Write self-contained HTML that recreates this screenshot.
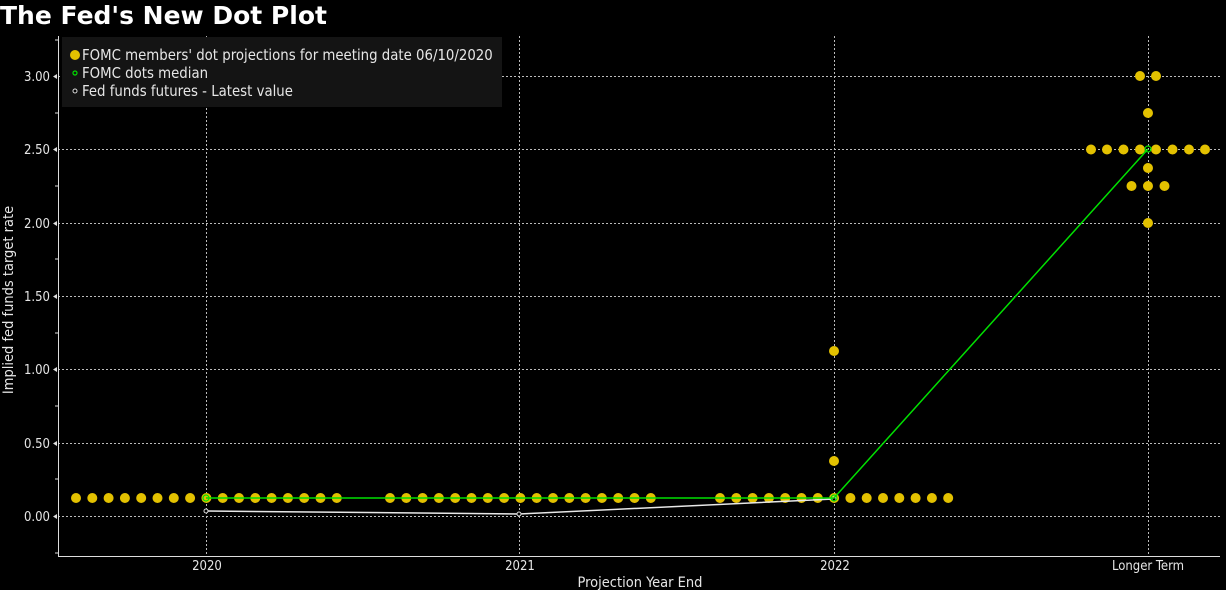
<!DOCTYPE html>
<html><head><meta charset="utf-8"><style>
html,body{margin:0;padding:0;background:#000;width:1226px;height:590px;overflow:hidden}
svg{display:block}
text{font-family:"DejaVu Sans Condensed","Liberation Sans",sans-serif;fill:#e6e6e6}
</style></head><body>
<svg width="1226" height="590" viewBox="0 0 1226 590">
<text x="0" y="24" style="font-family:'DejaVu Sans',sans-serif;font-weight:bold;font-size:25px;fill:#fff">The Fed's New Dot Plot</text>
<g stroke="#bbb" stroke-width="1" stroke-dasharray="2,2">
<line x1="58" y1="76.5" x2="1220" y2="76.5"/>
<line x1="58" y1="149.5" x2="1220" y2="149.5"/>
<line x1="58" y1="223.5" x2="1220" y2="223.5"/>
<line x1="58" y1="296.5" x2="1220" y2="296.5"/>
<line x1="58" y1="369.5" x2="1220" y2="369.5"/>
<line x1="58" y1="443.5" x2="1220" y2="443.5"/>
<line x1="58" y1="516.5" x2="1220" y2="516.5"/>
<line x1="206.5" y1="36" x2="206.5" y2="556"/>
<line x1="519.5" y1="36" x2="519.5" y2="556"/>
<line x1="834.5" y1="36" x2="834.5" y2="556"/>
<line x1="1148.5" y1="36" x2="1148.5" y2="556"/>
</g>
<rect x="62" y="37" width="440" height="70" fill="#141414"/>
<g stroke="#ddd" stroke-width="1">
<line x1="58.5" y1="36" x2="58.5" y2="556"/>
<line x1="58" y1="556.5" x2="1220" y2="556.5"/>
<line x1="55" y1="40" x2="58" y2="40"/><line x1="55" y1="113" x2="58" y2="113"/><line x1="55" y1="186" x2="58" y2="186"/><line x1="55" y1="259" x2="58" y2="259"/><line x1="55" y1="333" x2="58" y2="333"/><line x1="55" y1="406" x2="58" y2="406"/><line x1="55" y1="479" x2="58" y2="479"/><line x1="55" y1="553" x2="58" y2="553"/>
</g>
<g font-size="13" text-anchor="end">
<text x="50" y="81">3.00</text><text x="50" y="154">2.50</text><text x="50" y="228">2.00</text><text x="50" y="301">1.50</text><text x="50" y="374">1.00</text><text x="50" y="448">0.50</text><text x="50" y="521">0.00</text>
</g>
<g fill="#ddd"><path d="M53 76.5 L57 74 L57 79Z"/><path d="M53 149.5 L57 147 L57 152Z"/><path d="M53 223.5 L57 221 L57 226Z"/><path d="M53 296.5 L57 294 L57 299Z"/><path d="M53 369.5 L57 367 L57 372Z"/><path d="M53 443.5 L57 441 L57 446Z"/><path d="M53 516.5 L57 514 L57 519Z"/></g>
<g font-size="13" text-anchor="middle">
<text x="207" y="570">2020</text><text x="520" y="570">2021</text><text x="835" y="570">2022</text><text x="1148" y="570">Longer Term</text>
<text x="640" y="587" font-size="14.5">Projection Year End</text>
<text transform="translate(13,300) rotate(-90)" font-size="14.5">Implied fed funds target rate</text>
</g>
<g fill="#e3c100">
<circle cx="76" cy="498" r="5"/><circle cx="92.3" cy="498" r="5"/><circle cx="108.6" cy="498" r="5"/><circle cx="124.9" cy="498" r="5"/><circle cx="141.2" cy="498" r="5"/><circle cx="157.5" cy="498" r="5"/><circle cx="173.8" cy="498" r="5"/><circle cx="190.1" cy="498" r="5"/><circle cx="206.4" cy="498" r="5"/><circle cx="222.7" cy="498" r="5"/><circle cx="239" cy="498" r="5"/><circle cx="255.3" cy="498" r="5"/><circle cx="271.6" cy="498" r="5"/><circle cx="287.9" cy="498" r="5"/><circle cx="304.2" cy="498" r="5"/><circle cx="320.5" cy="498" r="5"/><circle cx="336.8" cy="498" r="5"/>
<circle cx="390" cy="498" r="5"/><circle cx="406.3" cy="498" r="5"/><circle cx="422.6" cy="498" r="5"/><circle cx="438.9" cy="498" r="5"/><circle cx="455.2" cy="498" r="5"/><circle cx="471.5" cy="498" r="5"/><circle cx="487.8" cy="498" r="5"/><circle cx="504.1" cy="498" r="5"/><circle cx="520.4" cy="498" r="5"/><circle cx="536.7" cy="498" r="5"/><circle cx="553" cy="498" r="5"/><circle cx="569.3" cy="498" r="5"/><circle cx="585.6" cy="498" r="5"/><circle cx="601.9" cy="498" r="5"/><circle cx="618.2" cy="498" r="5"/><circle cx="634.5" cy="498" r="5"/><circle cx="650.8" cy="498" r="5"/>
<circle cx="720" cy="498" r="5"/><circle cx="736.3" cy="498" r="5"/><circle cx="752.6" cy="498" r="5"/><circle cx="768.9" cy="498" r="5"/><circle cx="785.2" cy="498" r="5"/><circle cx="801.5" cy="498" r="5"/><circle cx="817.8" cy="498" r="5"/><circle cx="834.1" cy="498" r="5"/><circle cx="850.4" cy="498" r="5"/><circle cx="866.7" cy="498" r="5"/><circle cx="883" cy="498" r="5"/><circle cx="899.3" cy="498" r="5"/><circle cx="915.6" cy="498" r="5"/><circle cx="931.9" cy="498" r="5"/><circle cx="948.2" cy="498" r="5"/>
<circle cx="834" cy="351" r="5"/><circle cx="834" cy="461" r="5"/>
<circle cx="1091" cy="149.5" r="5"/><circle cx="1107" cy="149.5" r="5"/><circle cx="1123.5" cy="149.5" r="5"/><circle cx="1140" cy="149.5" r="5"/><circle cx="1156" cy="149.5" r="5"/><circle cx="1172.5" cy="149.5" r="5"/><circle cx="1189" cy="149.5" r="5"/><circle cx="1205" cy="149.5" r="5"/>
<circle cx="1140" cy="76" r="5"/><circle cx="1156" cy="76" r="5"/><circle cx="1148" cy="113" r="5"/><circle cx="1148" cy="168" r="5"/>
<circle cx="1131.5" cy="186" r="5"/><circle cx="1148" cy="186" r="5"/><circle cx="1164.5" cy="186" r="5"/><circle cx="1148" cy="223" r="5"/>
<circle cx="75" cy="55" r="5"/>
</g>
<polyline points="206,511 519,514 834,499" fill="none" stroke="#e8e8e8" stroke-width="1.5"/>
<g fill="#000" stroke="#ddd" stroke-width="1"><circle cx="206" cy="511" r="2"/><circle cx="519" cy="514" r="2"/><circle cx="834" cy="499" r="2"/><circle cx="75" cy="91" r="2"/></g>
<polyline points="206,498 834,498 1148,149" fill="none" stroke="#00e000" stroke-width="1.5"/>
<g fill="none" stroke="#00e000" stroke-width="1.2"><circle cx="206" cy="498" r="3"/><circle cx="834" cy="498" r="3"/><circle cx="1148" cy="149" r="3"/><circle cx="75" cy="73" r="2"/></g>
<g font-size="14.8">
<text x="82" y="60">FOMC members' dot projections for meeting date 06/10/2020</text>
<text x="82" y="78">FOMC dots median</text>
<text x="82" y="96">Fed funds futures - Latest value</text>
</g>
</svg>
</body></html>
